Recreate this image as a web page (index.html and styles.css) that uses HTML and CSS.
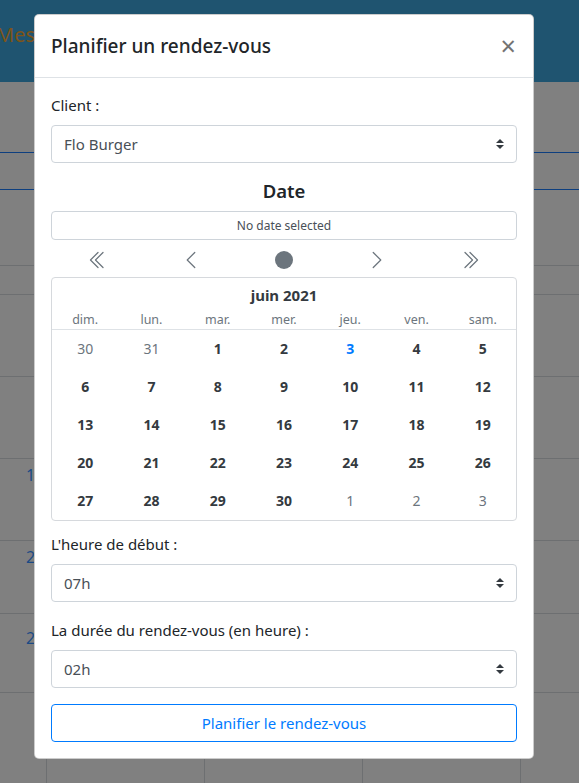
FILE: index.html
```html
<!DOCTYPE html>
<html lang="fr">
<head>
<meta charset="utf-8">
<title>Planifier un rendez-vous</title>
<link rel="stylesheet" href="styles.css">
</head>
<body>
<div class="page">
  <header class="topbar"><span class="brand">Mes rendez-vous</span></header>
  <div class="toolbar"></div>
  <div class="tabs"></div>
  <div class="spacer"></div>
  <div class="grid">
    <div class="trow h29"><div class="cell"></div><div class="cell"></div><div class="cell"></div><div class="cell"></div><div class="cell"></div></div>
    <div class="trow h82"><div class="cell"></div><div class="cell"></div><div class="cell"></div><div class="cell"></div><div class="cell"></div></div>
    <div class="trow h82"><div class="cell"></div><div class="cell"></div><div class="cell"></div><div class="cell"></div><div class="cell"></div></div>
    <div class="trow h82"><div class="cell hour">10h</div><div class="cell"></div><div class="cell"></div><div class="cell"></div><div class="cell"></div></div>
    <div class="trow h73"><div class="cell hour">20h</div><div class="cell"></div><div class="cell"></div><div class="cell"></div><div class="cell"></div></div>
    <div class="trow h79"><div class="cell hour lower">21h</div><div class="cell"></div><div class="cell"></div><div class="cell"></div><div class="cell"></div></div>
    <div class="trow h100"><div class="cell"></div><div class="cell"></div><div class="cell"></div><div class="cell"></div><div class="cell"></div></div>
  </div>
</div>

<div class="modal">
  <div class="modal-header">
    <h5 class="modal-title">Planifier un rendez-vous</h5>
    <button class="close" type="button">×</button>
  </div>
  <div class="modal-body">
    <div class="form-group">
      <label class="label">Client :</label>
      <div class="select">Flo Burger</div>
    </div>

    <h5 class="date-title">Date</h5>
    <div class="cal-output">No date selected</div>
    <div class="cal-nav">
      <span class="nav-btn"><svg width="20" height="20" viewBox="0 0 16 16" fill="#6c757d"><path d="M8.354 1.646a.5.5 0 0 1 0 .708L2.707 8l5.647 5.646a.5.5 0 0 1-.708.708l-6-6a.5.5 0 0 1 0-.708l6-6a.5.5 0 0 1 .708 0z"/><path d="M12.354 1.646a.5.5 0 0 1 0 .708L6.707 8l5.647 5.646a.5.5 0 0 1-.708.708l-6-6a.5.5 0 0 1 0-.708l6-6a.5.5 0 0 1 .708 0z"/></svg></span>
      <span class="nav-btn"><svg width="20" height="20" viewBox="0 0 16 16" fill="#6c757d"><path d="M11.354 1.646a.5.5 0 0 1 0 .708L5.707 8l5.647 5.646a.5.5 0 0 1-.708.708l-6-6a.5.5 0 0 1 0-.708l6-6a.5.5 0 0 1 .708 0z"/></svg></span>
      <span class="nav-btn"><svg width="20" height="20" viewBox="0 0 16 16" fill="#6c757d"><circle cx="8" cy="8" r="7.2"/></svg></span>
      <span class="nav-btn"><svg width="20" height="20" viewBox="0 0 16 16" fill="#6c757d"><path d="M4.646 1.646a.5.5 0 0 1 .708 0l6 6a.5.5 0 0 1 0 .708l-6 6a.5.5 0 0 1-.708-.708L10.293 8 4.646 2.354a.5.5 0 0 1 0-.708z"/></svg></span>
      <span class="nav-btn"><svg width="20" height="20" viewBox="0 0 16 16" fill="#6c757d"><path d="M3.646 1.646a.5.5 0 0 1 .708 0l6 6a.5.5 0 0 1 0 .708l-6 6a.5.5 0 0 1-.708-.708L9.293 8 3.646 2.354a.5.5 0 0 1 0-.708z"/><path d="M7.646 1.646a.5.5 0 0 1 .708 0l6 6a.5.5 0 0 1 0 .708l-6 6a.5.5 0 0 1-.708-.708L13.293 8 7.646 2.354a.5.5 0 0 1 0-.708z"/></svg></span>
    </div>

    <div class="cal-grid">
      <div class="cal-caption">juin 2021</div>
      <div class="cal-weekdays">
        <span>dim.</span><span>lun.</span><span>mar.</span><span>mer.</span><span>jeu.</span><span>ven.</span><span>sam.</span>
      </div>
      <div class="cal-days">
        <span class="muted">30</span><span class="muted">31</span><span>1</span><span>2</span><span class="today">3</span><span>4</span><span>5</span>
        <span>6</span><span>7</span><span>8</span><span>9</span><span>10</span><span>11</span><span>12</span>
        <span>13</span><span>14</span><span>15</span><span>16</span><span>17</span><span>18</span><span>19</span>
        <span>20</span><span>21</span><span>22</span><span>23</span><span>24</span><span>25</span><span>26</span>
        <span>27</span><span>28</span><span>29</span><span>30</span><span class="muted">1</span><span class="muted">2</span><span class="muted">3</span>
      </div>
    </div>

    <div class="form-group after-cal">
      <label class="label">L'heure de début :</label>
      <div class="select">07h</div>
    </div>
    <div class="form-group">
      <label class="label">La durée du rendez-vous (en heure) :</label>
      <div class="select">02h</div>
    </div>
    <button class="btn-outline" type="button">Planifier le rendez-vous</button>
  </div>
</div>
</body>
</html>
```

FILE: styles.css
```css
* { box-sizing: border-box; }

html, body {
  margin: 0;
  padding: 0;
}

body {
  width: 579px;
  height: 783px;
  overflow: hidden;
  background: #808080;
  font-family: "Noto Sans", "Open Sans", sans-serif;
  color: #212529;
  position: relative;
}

/* ---------- dimmed page behind ---------- */
.page {
  width: 579px;
}

.topbar {
  height: 82px;
  background: #1f5470;
  display: flex;
  align-items: center;
  padding-bottom: 14px;
  overflow: hidden;
}

.brand {
  color: #7e5419;
  font-size: 20px;
  margin-left: -4px;
  white-space: nowrap;
}

.toolbar {
  height: 71px;
  border-bottom: 1px solid #0e3f7f;
}

.tabs {
  height: 37px;
  border-bottom: 1px solid #0e3f7f;
}

.spacer {
  height: 75px;
}

.trow {
  display: grid;
  grid-template-columns: 46px 158px 158px 158px 1fr;
  border-top: 1px solid #6d6f71;
}

.h29 { height: 29px; }
.h82 { height: 82px; }
.h73 { height: 73px; }
.h79 { height: 79px; }
.h100 { height: 100px; }

.cell + .cell {
  border-left: 1px solid #6d6f71;
}

.hour {
  color: #1b4a85;
  font-size: 16px;
  padding: 5px 0 0 26px;
  white-space: nowrap;
  overflow: hidden;
}

.hour.lower { padding-top: 13px; }

/* ---------- modal ---------- */
.modal {
  position: absolute;
  left: 34px;
  top: 14px;
  width: 500px;
  background: #fff;
  border: 1px solid rgba(0, 0, 0, 0.2);
  border-radius: 5px;
}

.modal-header {
  display: flex;
  align-items: flex-start;
  justify-content: space-between;
  padding: 16px;
  border-bottom: 1px solid #dee2e6;
}

.modal-title {
  margin: 0;
  font-size: 19px;
  font-weight: 500;
  line-height: 30px;
  color: #212529;
}

.close {
  border: 0;
  background: transparent;
  padding: 0;
  margin: 0 1px 0 0;
  font-family: inherit;
  font-size: 27px;
  font-weight: 400;
  line-height: 30px;
  color: #000;
  opacity: 0.55;
}

.modal-body {
  padding: 15px 16px 16px;
}

.form-group {
  margin-bottom: 16px;
}

.label {
  display: block;
  font-size: 15px;
  line-height: 24px;
  margin-bottom: 8px;
  color: #212529;
}

.select {
  height: 38px;
  border: 1px solid #ced4da;
  border-radius: 4px;
  padding: 0 12px;
  font-size: 15px;
  line-height: 36px;
  color: #495057;
  background: #fff url("data:image/svg+xml,%3csvg xmlns='http://www.w3.org/2000/svg' width='4' height='5' viewBox='0 0 4 5'%3e%3cpath fill='%23343a40' d='M2 0L0 2h4zm0 5L0 3h4z'/%3e%3c/svg%3e") no-repeat right 12px center / 8px 10px;
}

.date-title {
  margin: 0 0 8px;
  text-align: center;
  font-size: 18.5px;
  font-weight: 600;
  line-height: 24px;
  color: #212529;
}

.cal-output {
  height: 29px;
  border: 1px solid #ced4da;
  border-radius: 4px;
  text-align: center;
  font-size: 12px;
  line-height: 27px;
  color: #495057;
}

.cal-nav {
  display: flex;
  margin: 4px 0 2px;
}

.nav-btn {
  flex: 1;
  height: 31px;
  display: flex;
  align-items: center;
  justify-content: center;
}

.cal-grid {
  border: 1px solid #d6d9dd;
  border-radius: 4px;
}

.cal-caption {
  height: 34px;
  text-align: center;
  font-size: 15px;
  font-weight: 700;
  line-height: 34px;
  color: #343a40;
}

.cal-weekdays {
  display: grid;
  grid-template-columns: repeat(7, 1fr);
  height: 18px;
  border-bottom: 1px solid #dee2e6;
  font-size: 12.5px;
  line-height: 16px;
  color: #6c757d;
  text-align: center;
}

.cal-days {
  display: grid;
  grid-template-columns: repeat(7, 1fr);
  grid-auto-rows: 38px;
  text-align: center;
  font-size: 14px;
  line-height: 38px;
  font-weight: 700;
  color: #343a40;
}

.cal-days .muted {
  font-weight: 400;
  color: #6c757d;
}

.cal-days .today {
  color: #007bff;
}

.after-cal {
  margin-top: 11px;
}

.btn-outline {
  display: block;
  width: 100%;
  height: 38px;
  border: 1px solid #007bff;
  border-radius: 4px;
  background: #fff;
  color: #007bff;
  font-family: inherit;
  font-size: 15px;
  line-height: 24px;
  padding: 0;
}
```
